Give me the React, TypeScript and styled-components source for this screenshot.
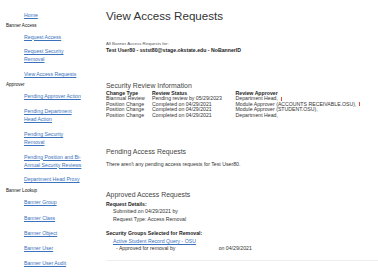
import React from "react";
import styled, { createGlobalStyle } from "styled-components";

const Global = createGlobalStyle`
  html, body { margin: 0; padding: 0; background: #ffffff; }
  body { font-family: "Liberation Sans", Arial, sans-serif; color: #222; }
`;

const Page = styled.div`
  display: flex;
  width: 378px;
  min-height: 274px;
`;

const Sidebar = styled.nav`
  width: 100px;
  flex: none;
  padding-top: 7.5px;
  display: flex;
  flex-direction: column;
`;

const Category = styled.div`
  padding-left: 6px;
  font-size: 4.6px;
  line-height: 8px;
  color: #111;
`;

const LinkList = styled.ul<{ $gap: number; $bottom: number }>`
  list-style: none;
  margin: 3px 0 ${(p) => p.$bottom}px;
  padding: 0 0 0 24px;
  display: flex;
  flex-direction: column;
  gap: ${(p) => p.$gap}px;
`;

const NavLink = styled.a`
  display: block;
  width: 60px;
  font-size: 5.2px;
  line-height: 8px;
  color: #3a72bd;
  text-decoration: underline;
`;

const Main = styled.main`
  flex: 1;
  padding: 9px 0 0 6px;
  display: flex;
  flex-direction: column;
`;

const Title = styled.h1`
  margin: 0;
  font-size: 11.6px;
  line-height: 14px;
  font-weight: normal;
  color: #333;
`;

const Small = styled.div`
  margin-top: 16.75px;
  font-size: 4.4px;
  line-height: 7.5px;
  color: #555;
`;

const Bold = styled.div<{ $mt?: number }>`
  margin-top: ${(p) => p.$mt ?? 0}px;
  font-size: 5.2px;
  line-height: 7.5px;
  font-weight: bold;
  color: #222;
`;

const SectionTitle = styled.h2<{ $mt: number }>`
  margin: ${(p) => p.$mt}px 0 0;
  font-size: 6.9px;
  line-height: 9px;
  font-weight: normal;
  color: #444;
`;

const Table = styled.div`
  margin-top: 1px;
  display: grid;
  grid-template-columns: 46px 83.5px 1fr;
  font-size: 5.2px;
  line-height: 5.5px;
  color: #333;
`;

const Th = styled.div`
  font-weight: bold;
  color: #222;
`;

const Td = styled.div`
  white-space: nowrap;
`;

const Redact = styled.span`
  display: inline-block;
  width: 0.6px;
  height: 4px;
  margin-left: 1.5px;
  background: #e0502a;
  vertical-align: middle;
`;

const Text = styled.div<{ $mt?: number; $indent?: number }>`
  margin-top: ${(p) => p.$mt ?? 0}px;
  padding-left: ${(p) => p.$indent ?? 0}px;
  font-size: 5.2px;
  line-height: 7.5px;
  color: #333;
  white-space: pre;
`;

const GroupLink = styled.a`
  color: #3a72bd;
  text-decoration: underline;
`;

const Rule = styled.hr`
  margin: 7.5px 0 0;
  border: none;
  border-top: 1px solid #eeeeee;
`;

const nav: { category?: string; links: string[]; gap: number; bottom: number }[] = [
  { links: ["Home"], gap: 6.7, bottom: 3 },
  {
    category: "Banner Access",
    links: ["Request Access", "Request Security Removal", "View Access Requests"],
    gap: 6.7,
    bottom: 3,
  },
  {
    category: "Approver",
    links: [
      "Pending Approver Action",
      "Pending Department Head Action",
      "Pending Security Removal",
      "Pending Position and Bi-Annual Security Reviews",
      "Department Head Proxy",
    ],
    gap: 6.9,
    bottom: 4,
  },
  {
    category: "Banner Lookup",
    links: ["Banner Group", "Banner Class", "Banner Object", "Banner User", "Banner User Audit"],
    gap: 7.2,
    bottom: 3,
  },
];

const rows: [string, string, string, boolean][] = [
  ["Biannual Review", "Pending review by 05/29/2023", "Department Head, ", true],
  ["Position Change", "Completed on 04/29/2021", "Module Approver (ACCOUNTS RECEIVABLE.OSU), ", true],
  ["Position Change", "Completed on 04/29/2021", "Module Approver (STUDENT.OSU),", false],
  ["Position Change", "Completed on 04/29/2021", "Department Head,", false],
];

export default function App() {
  return (
    <>
      <Global />
      <Page>
        <Sidebar>
          {nav.map((sec, i) => (
            <React.Fragment key={i}>
              {sec.category && <Category>{sec.category}</Category>}
              <LinkList $gap={sec.gap} $bottom={sec.bottom}>
                {sec.links.map((l) => (
                  <li key={l}>
                    <NavLink href="#">{l}</NavLink>
                  </li>
                ))}
              </LinkList>
            </React.Fragment>
          ))}
        </Sidebar>
        <Main>
          <Title>View Access Requests</Title>
          <Small>All Banner Access Requests for:</Small>
          <Bold>Test User80 - sstst80@stage.okstate.edu - NoBannerID</Bold>

          <SectionTitle $mt={25.75}>Security Review Information</SectionTitle>
          <Table>
            <Th>Change Type</Th>
            <Th>Review Status</Th>
            <Th>Review Approver</Th>
            {rows.map(([a, b, c, r], i) => (
              <React.Fragment key={i}>
                <Td>{a}</Td>
                <Td>{b}</Td>
                <Td>
                  {c}
                  {r && <Redact />}
                </Td>
              </React.Fragment>
            ))}
          </Table>

          <SectionTitle $mt={28.5}>Pending Access Requests</SectionTitle>
          <Text $mt={5}>There aren't any pending access requests for Test User80.</Text>

          <SectionTitle $mt={21.5}>Approved Access Requests</SectionTitle>
          <Bold $mt={2}>Request Details:</Bold>
          <Text $indent={7}>Submitted on 04/29/2021 by</Text>
          <Text $indent={7}>Request Type: Access Removal</Text>
          <Bold $mt={7.25}>Security Groups Selected for Removal:</Bold>
          <Text $indent={7}>
            <GroupLink href="#">Active Student Record Query - OSU</GroupLink>
          </Text>
          <Text $indent={10}>{"- Approved for removal by                              on 04/29/2021"}</Text>
          <Rule />
        </Main>
      </Page>
    </>
  );
}
